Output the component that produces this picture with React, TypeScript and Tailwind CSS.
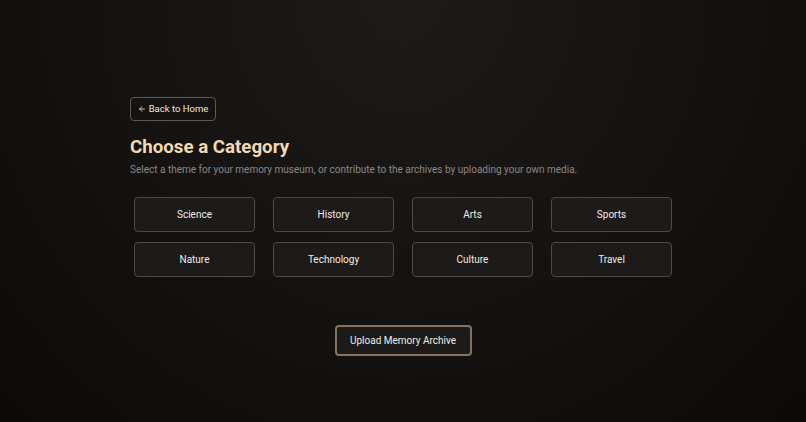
import React from "react";
import { ArrowLeft } from "lucide-react";

const categories = [
  "Science",
  "History",
  "Arts",
  "Sports",
  "Nature",
  "Technology",
  "Culture",
  "Travel",
];

export default function App() {
  return (
    <div
      className="min-h-[422px] w-full bg-[radial-gradient(ellipse_at_top,#1d1b18_0%,#131211_55%,#0b0a09_100%)] text-white"
      style={{ fontFamily: "Roboto, 'Liberation Sans', sans-serif" }}
    >
      <div className="mx-auto w-[546px] pt-[97px]">
        <button className="flex h-6 w-[86px] items-center justify-center gap-[3px] rounded-[4px] border border-[#5e5850] bg-[#141312] text-[9.5px] leading-none text-[#ece8e2]">
          <ArrowLeft size={8} strokeWidth={2.5} />
          <span>Back to Home</span>
        </button>

        <h1 className="mt-[12px] text-[18.7px] font-bold leading-[28px] text-[#f2d9b3]">
          Choose a Category
        </h1>
        <p className="mt-[1px] text-[10px] leading-[16px] text-[#8d8882]">
          Select a theme for your memory museum, or contribute to the archives by uploading your own media.
        </p>

        <div className="mt-[19px] grid grid-cols-4 gap-x-[18px] gap-y-[10px] px-1">
          {categories.map((c) => (
            <button
              key={c}
              className="h-[35px] rounded-[4px] border border-[#4f4a42] bg-[#1c1b19] text-[10px] text-[#f0ece6]"
            >
              {c}
            </button>
          ))}
        </div>

        <div className="mt-[48px] flex justify-center">
          <button className="h-[31px] w-[137px] rounded-[4px] border-2 border-[#85735e] bg-[#1c1b19] text-[10px] text-[#f0ece6]">
            Upload Memory Archive
          </button>
        </div>
      </div>
    </div>
  );
}
